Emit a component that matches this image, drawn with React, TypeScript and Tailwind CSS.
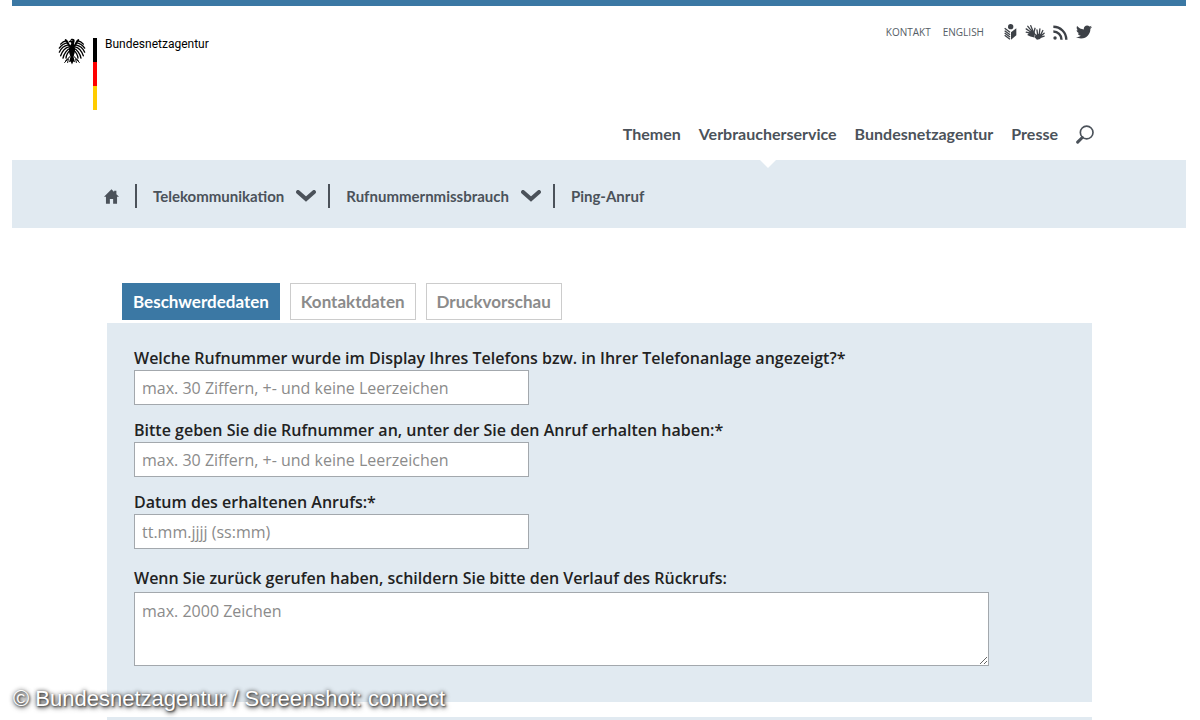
import { ReactNode } from "react";
import { FaTwitter } from "react-icons/fa";

const mainNav = ["Themen", "Verbraucherservice", "Bundesnetzagentur", "Presse"];
const activeNav = "Verbraucherservice";

const tabs = ["Beschwerdedaten", "Kontaktdaten", "Druckvorschau"];
const activeTab = "Beschwerdedaten";

const phoneHint = "max. 30 Ziffern, +- und keine Leerzeichen";
const fields = [
  { id: "caller", label: "Welche Rufnummer wurde im Display Ihres Telefons bzw. in Ihrer Telefonanlage angezeigt?*", hint: phoneHint },
  { id: "called", label: "Bitte geben Sie die Rufnummer an, unter der Sie den Anruf erhalten haben:*", hint: phoneHint },
  { id: "date", label: "Datum des erhaltenen Anrufs:*", hint: "tt.mm.jjjj (ss:mm)" },
];

function EagleWing() {
  return (
    <g fill="none" stroke="currentColor" strokeLinecap="round">
      <path d="M38 26C30 22 30 10 23 6" strokeWidth="6" />
      <path d="M25 8C17 9 12 13 8 18" strokeWidth="4" />
      <path d="M29 14C18 15 10 21 4 30" strokeWidth="4" />
      <path d="M31 20C21 22 9 30 4 42" strokeWidth="4" />
      <path d="M33 26C24 28 13 38 8 53" strokeWidth="4" />
      <path d="M35 31C28 34 18 46 15 60" strokeWidth="4" />
      <path d="M37 36C32 40 25 50 24 60" strokeWidth="4" />
      <path d="M38 52C34 58 30 62 23 67M31 62L29 73M28 64L20 73" strokeWidth="3" />
    </g>
  );
}

function Eagle() {
  return (
    <svg viewBox="0 0 84 80" className="h-[27px] w-7" aria-hidden="true">
      <EagleWing />
      <g transform="translate(84 0) scale(-1 1)">
        <EagleWing />
      </g>
      <path d="M42 2C47 1 50 4 50 8C50 13 47 15 48 20L51 30C52 42 48 50 46 54L51 72L46 70L42 79L38 70L33 72L38 54C35 50 32 42 33 30L37 21C40 17 41 14 38 12L31 12C33 9 34 8 37 7C38 4 39 2 42 2Z" fill="currentColor" />
      <path d="M40 7h3" stroke="#fff" strokeWidth="2" />
    </svg>
  );
}

function ReaderIcon() {
  return (
    <svg viewBox="0 0 39 48" className="h-4 w-[13px]" fill="currentColor" aria-hidden="true">
      <circle cx="20" cy="8" r="8" />
      <path d="M21 25L37 13V34L21 47Z" />
      <path d="M2 13L18 25M2 20L18 32M2 27L18 39M2 34L18 46" fill="none" stroke="currentColor" strokeWidth="4" />
    </svg>
  );
}

function HandsIcon() {
  return (
    <svg viewBox="0 0 60 46" className="h-[15px] w-5" aria-hidden="true">
      <g fill="none" stroke="currentColor" strokeLinecap="round" strokeWidth="4">
        <path d="M18 26L3 22M18 22L3 12M20 19L8 4M23 17L17 2M27 22L30 10" />
        <path d="M38 30L36 15M43 29L45 12M47 31L54 17M48 34L58 25M47 38L58 34M35 34L29 27" />
      </g>
      <path d="M15 21L23 15L30 24L28 38L16 35L6 31Z" fill="currentColor" />
      <path d="M35 29L45 26L50 34L46 43L36 45L28 37Z" fill="currentColor" />
    </svg>
  );
}

function RssIcon() {
  return (
    <svg viewBox="0 0 44 44" className="h-[15px] w-[15px]" fill="none" stroke="currentColor" strokeWidth="7" aria-hidden="true">
      <circle cx="6" cy="38" r="5" fill="currentColor" stroke="none" />
      <path d="M1 19A24 24 0 0 1 25 43M1 5A38 38 0 0 1 39 43" />
    </svg>
  );
}

function HomeIcon() {
  return (
    <svg viewBox="0 0 46 46" className="h-[15px] w-[15px]" fill="currentColor" aria-hidden="true">
      <path d="M23 1L31 9V5H38V16L46 24H40V45H28V31H18V45H6V24H0Z" />
    </svg>
  );
}

function SearchIcon() {
  return (
    <svg viewBox="0 0 54 56" className="h-[19px] w-[18px]" fill="none" stroke="currentColor" aria-hidden="true">
      <circle cx="32" cy="22" r="19" strokeWidth="5" />
      <path d="M19 37L5 51" strokeWidth="9" strokeLinecap="round" />
    </svg>
  );
}

function Chevron() {
  return (
    <svg viewBox="0 0 20 12" className="h-3 w-5" fill="none" stroke="currentColor" aria-hidden="true">
      <path d="M2 2L10 9L18 2" strokeWidth="4" strokeLinecap="round" />
    </svg>
  );
}

function Crumb({ children, menu }: { children: ReactNode; menu?: boolean }) {
  return (
    <li className="flex items-center">
      <span className="mr-4 h-6 w-[2px] bg-[#4b525a]" />
      <a href="#">{children}</a>
      {menu && (
        <button type="button" aria-label="Untermenü" className="mr-3 ml-3">
          <Chevron />
        </button>
      )}
    </li>
  );
}

function Header() {
  return (
    <header className="border-t-6 border-[#3b78a4] pr-[92px] pl-[46px]">
      <div className="flex items-start justify-between pt-4">
        <a href="#" className="mt-4 flex items-start text-black">
          <Eagle />
          <span className="ml-[7px] flex flex-col">
            <span className="h-6 w-1 bg-black" />
            <span className="h-6 w-1 bg-[#f00]" />
            <span className="h-6 w-1 bg-[#fc0]" />
          </span>
          <span className="ml-2 font-[Roboto,sans-serif] text-xs leading-3">Bundesnetzagentur</span>
        </a>
        <div className="flex items-center pr-[2px] font-['Open_Sans',sans-serif] text-[#3d4147]">
          <a href="#" className="mr-3 text-[10px] leading-5 text-[#555d66]">KONTAKT</a>
          <a href="#" className="mr-5 text-[10px] leading-5 text-[#555d66]">ENGLISH</a>
          <div className="flex items-center gap-2">
            <a href="#" aria-label="Leichte Sprache"><ReaderIcon /></a>
            <a href="#" aria-label="Gebärdensprache"><HandsIcon /></a>
            <a href="#" aria-label="RSS"><RssIcon /></a>
            <a href="#" aria-label="Twitter"><FaTwitter className="h-4 w-4" /></a>
          </div>
        </div>
      </div>
      <nav className="flex items-center justify-end gap-[18px] pt-3 pb-[14px] text-base leading-6 font-bold text-[#4b525a]">
        {mainNav.map((item) => (
          <a key={item} href="#" className="relative">
            {item}
            {item === activeNav && (
              <span className="absolute top-full left-1/2 mt-[14px] -ml-2 border-x-8 border-t-8 border-x-transparent border-t-white" />
            )}
          </a>
        ))}
        <button type="button" aria-label="Suche"><SearchIcon /></button>
      </nav>
    </header>
  );
}

export default function App() {
  return (
    <div className="relative h-screen overflow-hidden bg-white pr-[14px] pl-3 font-[Lato,sans-serif]">
      <Header />
      <nav className="flex h-[68px] items-center bg-[#e1eaf1] pt-1 pl-[92px] text-[15px] font-bold text-[#4b525a]">
        <a href="#" aria-label="Startseite" className="mr-4"><HomeIcon /></a>
        <ol className="flex">
          <Crumb menu>Telekommunikation</Crumb>
          <Crumb menu>Rufnummernmissbrauch</Crumb>
          <Crumb>Ping-Anruf</Crumb>
        </ol>
      </nav>

      <main className="mt-[55px] mr-[94px] ml-[95px]">
        <div className="flex gap-[10px] pl-[15px]">
          {tabs.map((tab) => (
            <button
              key={tab}
              type="button"
              className={
                tab === activeTab
                  ? "h-[37px] border border-[#3b78a4] bg-[#3b78a4] px-[10px] text-[17px] font-bold text-white"
                  : "h-[37px] border border-[#ccc] bg-white px-[10px] text-[17px] font-bold text-[#8b8b8b]"
              }
            >
              {tab}
            </button>
          ))}
        </div>
        <form className="mt-[3px] bg-[#e1eaf1] px-[27px] pt-[23px] pb-9 font-['Open_Sans',sans-serif] text-base leading-6 text-[#222]">
          {fields.map((field) => (
            <div key={field.id} className="mb-[13px]">
              <label htmlFor={field.id} className="block font-semibold">{field.label}</label>
              <input
                id={field.id}
                type="text"
                placeholder={field.hint}
                className="block h-[35px] w-[395px] border border-[#a3a8ad] bg-white px-[7px] placeholder:text-[#8b8b8b]"
              />
            </div>
          ))}
          <label htmlFor="course" className="block pt-1 pb-[2px] font-semibold">
            Wenn Sie zurück gerufen haben, schildern Sie bitte den Verlauf des Rückrufs:
          </label>
          <textarea
            id="course"
            placeholder="max. 2000 Zeichen"
            className="block h-[74px] w-[855px] max-w-full border border-[#a3a8ad] bg-white px-[7px] py-[6px] placeholder:text-[#8b8b8b]"
          />
        </form>
        <div className="mt-[15px] h-10 bg-[#e1eaf1]" />
      </main>

      <p className="absolute bottom-[7px] left-[13px] font-['Liberation_Sans',sans-serif] text-[22px] leading-7 text-white [text-shadow:1px_1px_2px_#444,0_0_4px_#555,1px_2px_5px_#555]">
        © Bundesnetzagentur / Screenshot: connect
      </p>
    </div>
  );
}
